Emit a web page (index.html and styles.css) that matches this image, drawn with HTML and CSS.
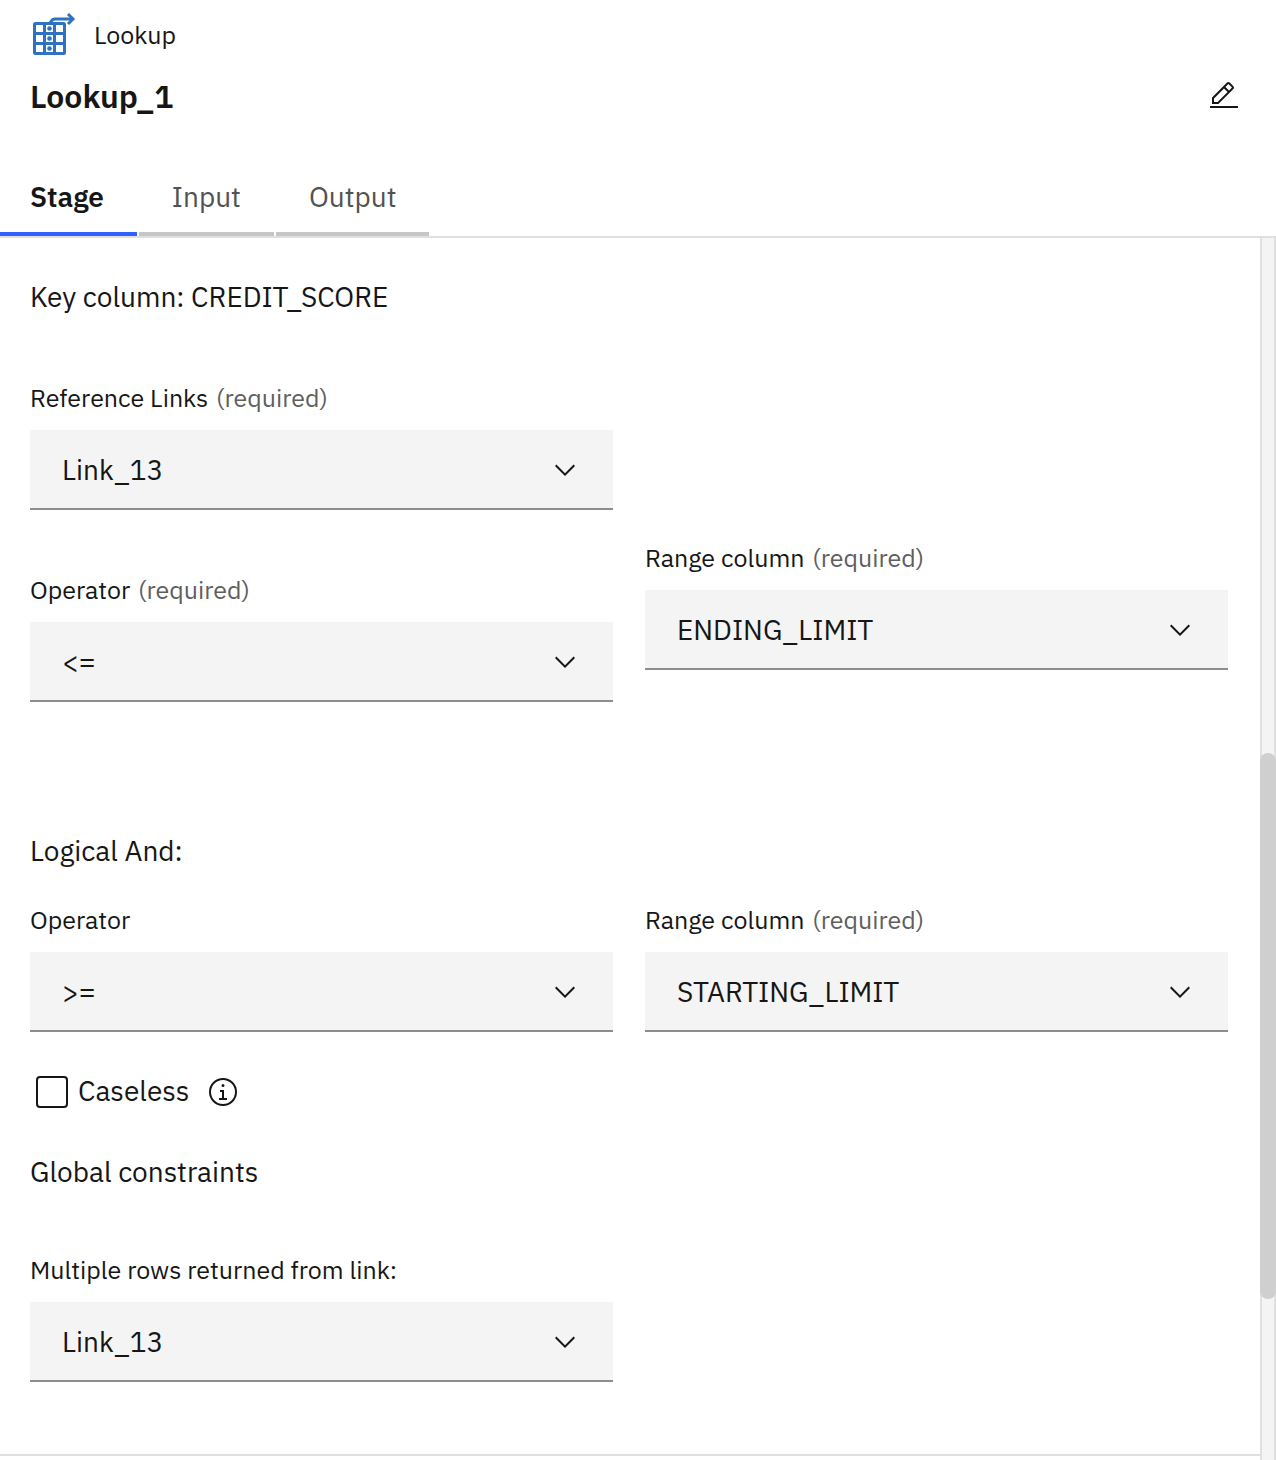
FILE: index.html
```html
<!DOCTYPE html>
<html lang="en">
<head>
<meta charset="utf-8">
<meta name="viewport" content="width=device-width, initial-scale=1">
<title>Lookup_1</title>
<link rel="stylesheet" href="styles.css">
</head>
<body>
<svg class="sprite" aria-hidden="true">
  <symbol id="chevron" viewBox="0 0 16 16"><path d="M8 11 3 6l.7-.7L8 9.600l4.300-4.300L13 6z"/></symbol>
</svg>
<div class="panel">
  <header class="header">
    <div class="kind">
      <svg class="kind-icon" viewBox="0 0 48 46" aria-hidden="true">
        <g fill="none" stroke="#2f72c0">
          <rect x="4.500" y="11.500" width="30" height="30" rx="1" stroke-width="3"/>
          <path d="M14.500 11v31M24.500 11v31M4 21.500h31M4 31.500h31" stroke-width="3"/>
          <path d="M20 11.500c1-2.500 2.500-4.500 5-4.500h17" stroke-width="3"/>
          <path d="M38 2l5 5-5 5" stroke-width="3"/>
        </g>
        <g fill="#2f72c0"><circle cx="19.500" cy="16.500" r="2.300"/><circle cx="19.500" cy="26.500" r="2.300"/><circle cx="19.500" cy="36.500" r="2.300"/></g>
      </svg>
      <span>Lookup</span>
    </div>
    <div class="title-row">
      <h1 class="title">Lookup_1</h1>
      <button class="icon-button" type="button" aria-label="Edit name">
        <svg class="edit-icon" viewBox="0 0 32 32" aria-hidden="true"><path d="M2 26h28v2H2zM25.400 9c.8-.8.8-2 0-2.800l-3.600-3.600c-.8-.8-2-.8-2.800 0l-15 15V24h6.400l15-15zm-5-5L24 7.600l-3 3L17.400 7l3-3zM6 22v-3.600l10-10 3.600 3.600-10 10H6z"/></svg>
      </button>
    </div>
  </header>
  <div class="tabs" role="tablist">
    <button class="tab tab-active" type="button" role="tab" aria-selected="true">Stage</button>
    <button class="tab" type="button" role="tab" aria-selected="false">Input</button>
    <button class="tab" type="button" role="tab" aria-selected="false">Output</button>
  </div>
  <div class="body">
    <main class="content">
      <h2 class="heading">Key column: CREDIT_SCORE</h2>
      <div class="fields fields-link">
        <div class="field">
          <label class="label" for="reference-links">Reference Links <span class="required">(required)</span></label>
          <div class="dropdown"><select class="select" id="reference-links"><option>Link_13</option></select><svg class="chevron" aria-hidden="true"><use href="#chevron"/></svg></div>
        </div>
      </div>
      <div class="fields fields-range">
        <div class="field field-lowered">
          <label class="label" for="operator-1">Operator <span class="required">(required)</span></label>
          <div class="dropdown"><select class="select" id="operator-1"><option>&lt;=</option></select><svg class="chevron" aria-hidden="true"><use href="#chevron"/></svg></div>
        </div>
        <div class="field">
          <label class="label" for="range-1">Range column <span class="required">(required)</span></label>
          <div class="dropdown"><select class="select" id="range-1"><option>ENDING_LIMIT</option></select><svg class="chevron" aria-hidden="true"><use href="#chevron"/></svg></div>
        </div>
      </div>
      <h2 class="heading heading-and">Logical And:</h2>
      <div class="fields fields-and">
        <div class="field">
          <label class="label" for="operator-2">Operator</label>
          <div class="dropdown"><select class="select" id="operator-2"><option>&gt;=</option></select><svg class="chevron" aria-hidden="true"><use href="#chevron"/></svg></div>
        </div>
        <div class="field">
          <label class="label" for="range-2">Range column <span class="required">(required)</span></label>
          <div class="dropdown"><select class="select" id="range-2"><option>STARTING_LIMIT</option></select><svg class="chevron" aria-hidden="true"><use href="#chevron"/></svg></div>
        </div>
      </div>
      <div class="check-row">
        <input class="checkbox" type="checkbox" id="caseless">
        <label class="check-label" for="caseless">Caseless</label>
        <button class="icon-button" type="button" aria-label="About caseless">
          <svg class="info-icon" viewBox="0 0 32 32" aria-hidden="true"><path d="M17 22v-8h-4v2h2v6h-3v2h8v-2zM16 8a1.500 1.500 0 1 0 1.500 1.500A1.500 1.500 0 0 0 16 8z"/><path d="M16 30a14 14 0 1 1 14-14 14 14 0 0 1-14 14zm0-26a12 12 0 1 0 12 12A12 12 0 0 0 16 4z"/></svg>
        </button>
      </div>
      <h2 class="heading heading-global">Global constraints</h2>
      <div class="fields fields-global">
        <div class="field">
          <label class="label" for="multiple-rows">Multiple rows returned from link:</label>
          <div class="dropdown"><select class="select" id="multiple-rows"><option>Link_13</option></select><svg class="chevron" aria-hidden="true"><use href="#chevron"/></svg></div>
        </div>
      </div>
    </main>
    <div class="scrollbar" aria-hidden="true"><div class="thumb"></div></div>
  </div>
</div>
</body>
</html>
```
FILE: styles.css
```css
* { box-sizing: border-box; }

body {
  margin: 0;
  background: #fff;
  color: #161616;
  font-family: "IBM Plex Sans", "Noto Sans", sans-serif;
  font-size: 28px;
  line-height: 36px;
}

button, select, input { font: inherit; color: inherit; margin: 0; }
svg { display: block; fill: #161616; }
.sprite { display: none; }

.panel { display: flex; flex-direction: column; min-height: 100vh; }

.header { padding: 12px 36px 0 30px; }
.kind { display: flex; align-items: center; gap: 16px; height: 46px; font-size: 25px; }
.kind-icon { width: 48px; height: 46px; flex: none; }
.title-row { display: flex; align-items: center; justify-content: space-between; height: 76px; }
.title { margin: 0; font-size: 32px; line-height: 40px; font-weight: 600; }
.icon-button { padding: 0; border: 0; background: none; }
.edit-icon, .info-icon { width: 32px; height: 32px; }

.tabs { display: flex; gap: 2px; height: 104px; padding-top: 28px; border-bottom: 2px solid #e0e0e0; }
.tabs { height: 104px; }
.tab {
  padding: 0 33px;
  border: 0;
  border-bottom: 4px solid #c6c6c6;
  background: none;
  color: #525252;
  text-align: left;
}
.tab-active { padding-left: 30px; border-color: #2f62ff; color: #161616; font-weight: 600; }

.body { display: flex; flex: 1; }
.content { flex: 1; align-self: flex-start; padding: 41px 32px 72px 30px; border-bottom: 2px solid #e0e0e0; }
.heading { margin: 0; font-size: 28px; line-height: 36px; font-weight: 400; }
.heading-and { margin-top: 131px; }
.heading-global { margin-top: 44px; }

.fields { display: grid; grid-template-columns: 1fr 1fr; gap: 32px; align-items: start; }
.fields-link { margin-top: 67px; }
.fields-range { margin-top: 32px; }
.fields-and { margin-top: 35px; }
.fields-global { margin-top: 64px; }
.field { display: flex; flex-direction: column; gap: 16px; }
.field-lowered { padding-top: 32px; }
.label { font-size: 25px; line-height: 32px; }
.required { margin-left: 2px; color: #5f5f5f; }

.dropdown { display: grid; align-items: center; background: #f4f4f4; }
.dropdown > * { grid-area: 1 / 1; }
.select {
  width: 100%;
  height: 80px;
  padding: 2px 96px 0 32px;
  border: 0;
  border-bottom: 2px solid #8d8d8d;
  border-radius: 0;
  background: none;
  appearance: none;
}
.chevron { width: 32px; height: 32px; margin-right: 32px; justify-self: end; pointer-events: none; }

.check-row { display: flex; align-items: center; gap: 10px; margin-top: 42px; padding-left: 6px; }
.checkbox { width: 32px; height: 32px; border: 2px solid #161616; border-radius: 4px; appearance: none; }
.check-label { margin-right: 8px; padding-bottom: 2px; line-height: 34px; }

.scrollbar {
  display: grid;
  grid-template-rows: 515fr 546fr 161fr;
  width: 16px;
  border: solid #e0e0e0;
  border-width: 0 2px;
  background: #f4f4f4;
}
.thumb { grid-row: 2; margin: 0 -2px; border-radius: 8px; background: #cfcfcf; }
```
